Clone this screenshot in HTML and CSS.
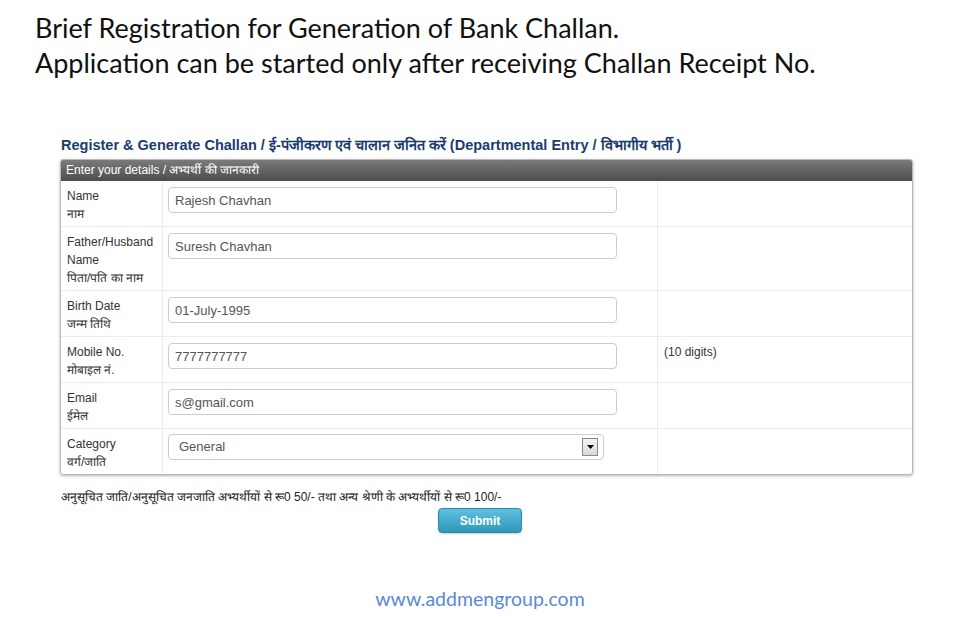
FILE: index.html
```html
<!DOCTYPE html>
<html lang="en">
<head>
    <meta charset="UTF-8">
    <title>Bank Challan Registration</title>
    <link rel="stylesheet" href="styles.css">
</head>
<body>
    <div class="intro">
        <p>Brief Registration for Generation of Bank Challan.</p>
        <p>Application can be started only after receiving Challan Receipt No.</p>
    </div>

    <div class="wrap">
        <h2 class="title">Register &amp; Generate Challan / ई-पंजीकरण एवं चालान जनित करें (Departmental Entry / विभागीय भर्ती )</h2>

        <div class="panel">
            <div class="panel-head">Enter your details / अभ्यर्थी की जानकारी</div>
            <table class="form-table">
                <tr>
                    <td class="lbl">Name<br>नाम</td>
                    <td class="fld"><input type="text" class="txt" value="Rajesh Chavhan"></td>
                    <td class="hint"></td>
                </tr>
                <tr>
                    <td class="lbl">Father/Husband<br>Name<br>पिता/पति का नाम</td>
                    <td class="fld"><input type="text" class="txt" value="Suresh Chavhan"></td>
                    <td class="hint"></td>
                </tr>
                <tr>
                    <td class="lbl">Birth Date<br>जन्म तिथि</td>
                    <td class="fld"><input type="text" class="txt" value="01-July-1995"></td>
                    <td class="hint"></td>
                </tr>
                <tr>
                    <td class="lbl">Mobile No.<br>मोबाइल नं.</td>
                    <td class="fld"><input type="text" class="txt" value="7777777777"></td>
                    <td class="hint">(10 digits)</td>
                </tr>
                <tr>
                    <td class="lbl">Email<br>ईमेल</td>
                    <td class="fld"><input type="text" class="txt" value="s@gmail.com"></td>
                    <td class="hint"></td>
                </tr>
                <tr>
                    <td class="lbl">Category<br>वर्ग/जाति</td>
                    <td class="fld">
                        <div class="select">
                            <span>General</span>
                            <span class="arrow">
                                <svg width="7" height="4" viewBox="0 0 7 4"><path d="M0 0h7L3.5 4z" fill="#000"/></svg>
                            </span>
                        </div>
                    </td>
                    <td class="hint"></td>
                </tr>
            </table>
        </div>

        <p class="note">अनुसूचित जाति/अनुसूचित जनजाति अभ्यर्थीयों से रू0 50/- तथा अन्य श्रेणी के अभ्यर्थीयों से रू0 100/-</p>
    </div>

    <div class="actions">
        <button class="btn">Submit</button>
    </div>

    <div class="site">www.addmengroup.com</div>
</body>
</html>
```

FILE: styles.css
```css
body {
    margin: 0;
    background-color: #fff;
    font-family: "Liberation Sans", Arial, sans-serif;
    color: #333;
}

.intro {
    padding: 10px 0 0 35px;
    font-family: Lato, "Open Sans", sans-serif;
    font-size: 27px;
    line-height: 35px;
    color: #111;
}

.intro p {
    margin: 0;
}

.wrap {
    width: 853px;
    margin: 0 0 0 60px;
}

.title {
    margin: 56px 0 5px 1px;
    font-size: 14.5px;
    line-height: 18px;
    color: #1b3c6b;
}

.panel {
    border: 1px solid #b8b8b8;
    border-radius: 3px;
    box-shadow: 0 1px 3px rgba(0, 0, 0, 0.3);
    overflow: hidden;
}

.panel-head {
    height: 21px;
    line-height: 21px;
    padding-left: 5px;
    font-size: 12px;
    color: #fff;
    background: linear-gradient(#7b7b7b, #4c4c4c);
}

.form-table {
    width: 100%;
    border-collapse: collapse;
    font-size: 12px;
}

.form-table td {
    vertical-align: top;
    border-top: 1px solid #ececec;
    border-left: 1px solid #ececec;
    padding: 6px 6px 3px 6px;
    line-height: 18px;
}

.form-table tr:first-child td {
    border-top: none;
}

.form-table td:first-child {
    border-left: none;
}

.lbl {
    width: 89px;
}

.fld {
    width: 482px;
}

.hint {
    color: #333;
}

.txt {
    display: block;
    box-sizing: border-box;
    width: 449px;
    height: 26px;
    margin: 0 0 0 -1px;
    padding: 0 6px;
    border: 1px solid #ccc;
    border-radius: 4px;
    font-family: "Liberation Sans", Arial, sans-serif;
    font-size: 13px;
    color: #555;
}

.select {
    box-sizing: border-box;
    width: 436px;
    height: 26px;
    margin: -1px 0 0 -1px;
    padding: 0 5px 0 10px;
    border: 1px solid #ccc;
    border-radius: 4px;
    display: flex;
    align-items: center;
    justify-content: space-between;
    font-size: 13px;
    color: #555;
}

.arrow {
    width: 14px;
    height: 16px;
    border: 1px solid #888;
    background: linear-gradient(#f4f4f4, #d8d8d8);
    display: flex;
    align-items: center;
    justify-content: center;
}

.note {
    margin: 13px 0 0 1px;
    font-size: 12px;
    color: #222;
}

.actions {
    display: flex;
    justify-content: center;
    margin-top: 3px;
}

.btn {
    width: 84px;
    height: 25px;
    border: 1px solid #2b8aa8;
    border-radius: 4px;
    background: linear-gradient(#5ec0de, #2f98b8);
    color: #fff;
    font-family: "Liberation Sans", Arial, sans-serif;
    font-size: 12px;
    font-weight: bold;
    box-shadow: 0 1px 2px rgba(0, 0, 0, 0.2);
}

.site {
    margin-top: 54px;
    text-align: center;
    font-family: Lato, "Open Sans", sans-serif;
    font-size: 19.5px;
    color: #5a8ad6;
}
```
